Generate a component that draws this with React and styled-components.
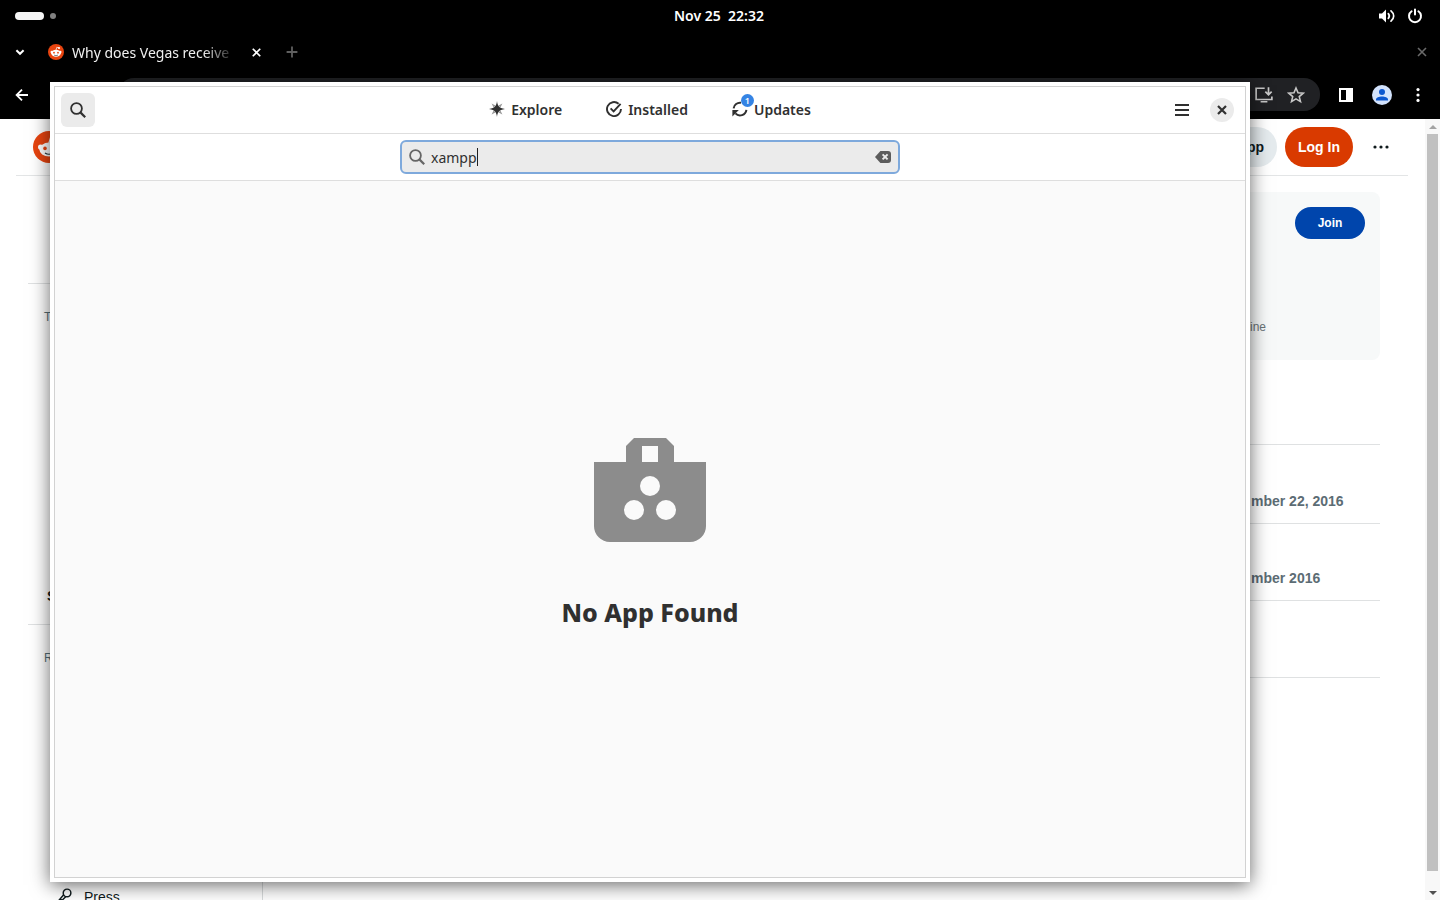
import React from "react"
import styled, { createGlobalStyle } from "styled-components"

const GlobalStyle = createGlobalStyle`
  * { box-sizing: border-box; }
  body { margin: 0; background: #000000; overflow: hidden; }
  button { border: 0; padding: 0; background: none; font: inherit; color: inherit; }
  a { color: inherit; text-decoration: none; }
  svg { display: block; flex: none; }
`;

const Desktop = styled.div`
  position: relative;
  display: flex;
  flex-direction: column;
  height: 100vh;
  overflow: hidden;
  background: #000000;
  color: #ffffff;
  font-family: "Noto Sans", sans-serif;
  font-size: 14px;
`;

/* shell top bar */
const TopBar = styled.header`
  display: grid;
  grid-template-columns: 1fr auto 1fr;
  align-items: center;
  height: 32px;
  padding: 0 17px 0 15px;
`;

const Workspaces = styled.div`
  display: flex;
  align-items: center;
  gap: 6px;
`;

const Pill = styled.span`
  width: ${props => (props.$active ? "29px" : "6px")};
  height: ${props => (props.$active ? "8px" : "6px")};
  border-radius: 4px;
  background: ${props => (props.$active ? "#f6f6f6" : "#808080")};
`;

const Clock = styled.time`
  padding-bottom: 2px;
  font-weight: 600;
  white-space: pre;
`;

const Tray = styled.div`
  display: flex;
  justify-content: flex-end;
  align-items: center;
  gap: 12px;
`;

/* browser */
const TabStrip = styled.div`
  display: flex;
  align-items: center;
  height: 40px;
  padding: 0 10px;
`;

const IconButton = styled.button`
  display: flex;
  align-items: center;
  justify-content: center;
  width: ${props => props.$size || 24}px;
  height: ${props => props.$size || 24}px;
  color: ${props => props.$color || "inherit"};
`;

const Tab = styled.div`
  display: flex;
  align-items: center;
  gap: 8px;
  margin: 0 12px 0 18px;
  width: 220px;
`;

const TabTitle = styled.span`
  flex: 1;
  overflow: hidden;
  white-space: nowrap;
  color: #f0f0f0;
  mask-image: linear-gradient(to right, #000 80%, transparent);
`;

const Spacer = styled.div`
  flex: 1;
`;

const Toolbar = styled.div`
  display: flex;
  align-items: center;
  height: 47px;
  padding: 0 10px 2px;
`;

const Omnibox = styled.div`
  flex: 1;
  display: flex;
  align-items: center;
  justify-content: flex-end;
  gap: 8px;
  height: 33px;
  margin: 0 14px 0 84px;
  padding: 0 12px;
  border-radius: 16px;
  background: #202124;
  color: #c7c7c7;
`;

const ToolbarActions = styled.div`
  display: flex;
  gap: 12px;
`;

/* web page */
const Viewport = styled.div`
  flex: 1;
  display: flex;
  min-height: 0;
  background: #ffffff;
  color: #0f1a1c;
  font-family: "Liberation Sans", sans-serif;
`;

const Page = styled.div`
  flex: 1;
  padding: 0 17px 0 16px;
`;

const SiteHeader = styled.div`
  display: flex;
  align-items: center;
  gap: 8px;
  height: 57px;
  padding: 0 7px 0 17px;
  border-bottom: 1px solid #e3e5e6;
`;

const PillButton = styled.button`
  min-width: 68px;
  height: 40px;
  padding: 0 13px;
  border-radius: 20px;
  background: ${props => props.$bg};
  color: ${props => props.$color || "#ffffff"};
  font-size: 14px;
  font-weight: 700;
`;

const JoinButton = styled(PillButton)`
  min-width: 70px;
  height: 32px;
  font-size: 12px;
`;

const Columns = styled.div`
  display: flex;
  height: 100%;
`;

const Sidebar = styled.nav`
  width: 247px;
  padding: 0 12px;
  border-right: 1px solid #d8dbdc;
  font-size: 14px;
`;

const SideSection = styled.section`
  height: ${props => props.$height}px;
  padding: 0 16px;
  border-bottom: 1px solid #dfe1e2;
`;

const SideHeading = styled.h2`
  margin: 0;
  padding-top: 24px;
  font-size: 12px;
  font-weight: 400;
  line-height: 18px;
  color: #576f76;
`;

const SideMore = styled.a`
  display: block;
  margin-top: 260px;
  padding-left: 3px;
  font-weight: 700;
  line-height: 20px;
`;

const SideLink = styled.a`
  display: flex;
  align-items: center;
  gap: 12px;
  margin-top: 220px;
  padding-left: 10px;
  line-height: 20px;
`;

const Main = styled.main`
  flex: 1;
  padding: 16px 28px 0 12px;
`;

const Banner = styled.section`
  display: flex;
  flex-direction: column;
  align-items: flex-end;
  justify-content: space-between;
  height: 168px;
  padding: 15px;
  border-radius: 8px;
  background: #f7f9f9;
`;

const BannerNote = styled.span`
  padding: 0 99px 10px 0;
  font-size: 12px;
  line-height: 16px;
  color: #6a7478;
`;

const DateRow = styled.div`
  display: grid;
  grid-template-columns: 1fr 129px;
  align-items: end;
  height: ${props => props.$height}px;
  padding-bottom: 12px;
  border-bottom: 1px solid #dfe1e2;
  font-size: 14px;
  font-weight: 700;
  line-height: 20px;
  color: #5c6c74;
`;

const DateText = styled.span`
  grid-column: 2;
`;

const Scrollbar = styled.div`
  display: flex;
  flex-direction: column;
  align-items: center;
  width: 15px;
  background: #f8f8f8;
`;

const ScrollArrow = styled.span`
  display: flex;
  align-items: center;
  height: 15px;
  color: ${props => props.$color};
`;

const Thumb = styled.div`
  flex: 1;
  width: 11px;
  margin-bottom: 14px;
  background: #c0c0c0;
`;

/* software window */
const SoftwareWindow = styled.section`
  position: absolute;
  top: 82px;
  right: 190px;
  bottom: 18px;
  left: 50px;
  display: flex;
  padding: 4px;
  background: #ffffff;
  color: #303030;
  box-shadow: 0 3px 18px rgba(0, 0, 0, 0.6);
`;

const WindowBody = styled.div`
  flex: 1;
  display: flex;
  flex-direction: column;
  border: 1px solid #d2d2d2;
`;

const HeaderBar = styled.header`
  display: grid;
  grid-template-columns: 1fr auto 1fr;
  align-items: center;
  height: 47px;
  padding: 0 6px;
  border-bottom: 1px solid #dedede;
`;

const SearchToggle = styled(IconButton)`
  border-radius: 6px;
  background: #ebebeb;
`;

const ViewSwitcher = styled.nav`
  display: flex;
  gap: 44px;
`;

const ViewButton = styled.button`
  display: flex;
  align-items: center;
  gap: 6px;
  height: 34px;
  padding-bottom: 2px;
  font-weight: 600;
`;

const ViewIcon = styled.span`
  position: relative;
`;

const Badge = styled.span`
  position: absolute;
  top: -7px;
  left: 9px;
  width: 13px;
  height: 13px;
  border-radius: 50%;
  background: #3584e4;
  color: #ffffff;
  font-size: 9px;
  line-height: 13px;
  text-align: center;
`;

const WindowControls = styled.div`
  display: flex;
  justify-content: flex-end;
  align-items: center;
  gap: 6px;
`;

const CloseCircle = styled.span`
  display: flex;
  align-items: center;
  justify-content: center;
  width: 24px;
  height: 24px;
  border-radius: 50%;
  background: #ebebeb;
`;

const SearchBar = styled.div`
  display: flex;
  justify-content: center;
  align-items: center;
  height: 47px;
  border-bottom: 1px solid #dedede;
`;

const SearchField = styled.label`
  display: flex;
  align-items: center;
  width: 500px;
  height: 34px;
  padding: 0 7px;
  border: 2px solid #7ea9dc;
  border-radius: 6px;
  background: #ebebeb;
  color: #666666;
`;

const SearchInput = styled.input`
  field-sizing: content;
  margin-left: 6px;
  padding: 0;
  border: 0;
  outline: 0;
  background: none;
  color: #303030;
  font: 14px "Noto Sans", sans-serif;
`;

const Caret = styled.span`
  width: 1px;
  height: 18px;
  background: #202020;
`;

const StatusPage = styled.div`
  flex: 1;
  display: flex;
  flex-direction: column;
  align-items: center;
  justify-content: center;
  gap: 36px;
  padding-top: 2px;
  background: #fafafa;
`;

const StatusTitle = styled.h1`
  margin: 0;
  font-size: 25px;
  font-weight: 800;
  line-height: 36px;
`;

const Stroke = ({ size = 16, width = 2, children, ...rest }) => (
  <svg width={size} height={size} viewBox="0 0 16 16" fill="none" stroke="currentColor" strokeWidth={width} {...rest}>
    {children}
  </svg>
)

const SearchIcon = () => (
  <Stroke width={1.8}>
    <circle cx="6.5" cy="6.5" r="5.4" />
    <path d="M10.4 10.4L15.2 15.2" strokeWidth="2.2" />
  </Stroke>
)

const CrossIcon = ({ size = 16, width = 2 }) => (
  <Stroke size={size} width={width}>
    <path d="M4 4l8 8M12 4l-8 8" />
  </Stroke>
)

const SoundIcon = () => (
  <Stroke width={1.7} strokeLinecap="round">
    <path d="M0 5.5h3L7 1.5v13L3 10.5H0z" fill="currentColor" stroke="none" />
    <path d="M9.3 5.6c1.2 1.4 1.2 3.4 0 4.8M12 2.8c3.6 3 3.6 7.4 0 10.4" />
  </Stroke>
)

const PowerIcon = () => (
  <Stroke width={2} strokeLinecap="round">
    <path d="M4.6 3.2a6 6 0 1 0 6.8 0M8 1.4v5.2" />
  </Stroke>
)

const RedditIcon = ({ size }) => (
  <svg width={size} height={size} viewBox="0 0 32 32">
    <circle cx="16" cy="16" r="16" fill="#e8440f" />
    <path d="M16 12l1.6-5.4 4 1" fill="none" stroke="#ffffff" strokeWidth="1.4" />
    <circle cx="22" cy="8" r="2.2" fill="#ffffff" />
    <circle cx="7.6" cy="16" r="2.6" fill="#ffffff" />
    <circle cx="24.4" cy="16" r="2.6" fill="#ffffff" />
    <ellipse cx="16" cy="18.6" rx="9.6" ry="7" fill="#ffffff" />
    <circle cx="12" cy="17.4" r="1.8" fill="#e8440f" />
    <circle cx="20" cy="17.4" r="1.8" fill="#e8440f" />
    <path d="M12 22c2.2 1.6 5.8 1.6 8 0" fill="none" stroke="#25343a" strokeWidth="1.2" />
  </svg>
)

const ExploreIcon = () => (
  <svg width="16" height="16" viewBox="0 0 16 16" fill="currentColor">
    <path d="M8 0c.6 4.8 1.6 6.8 8 8c-6.400 1.200-7.400 3.200-8 8c-.6-4.800-1.600-6.800-8-8c6.400-1.200 7.400-3.200 8-8z" />
    <path d="M2.600 2.600L6.400 4.600L4.600 6.400zM13.400 2.600L11.400 6.400L9.600 4.600zM2.600 13.400L4.600 9.600L6.400 11.400zM13.400 13.400L9.600 11.400L11.400 9.600z" opacity="0.5" />
  </svg>
)

const InstalledIcon = () => (
  <Stroke width={1.9}>
    <path d="M12.600 2.800A7 7 0 1 0 15 8" />
    <path d="M4.600 7.400l3 3 7-7.600" />
  </Stroke>
)

const UpdatesIcon = () => (
  <Stroke>
    <path d="M1.600 7.400A6.400 6.400 0 0 1 9 1.800M14.400 8.800A6.400 6.400 0 0 1 3.400 12.400" />
    <path d="M0.400 15.400V9h6.400z" fill="currentColor" stroke="none" />
  </Stroke>
)

const ClearIcon = () => (
  <svg width="16" height="16" viewBox="0 0 16 16">
    <path d="M5.400 2H13a3 3 0 0 1 3 3v6a3 3 0 0 1-3 3H5.400L0 8z" fill="#5c5c5c" />
    <path d="M7.600 5.400l5 5M12.600 5.400l-5 5" stroke="#ebebeb" strokeWidth="2" />
  </svg>
)

const BagIcon = () => (
  <svg width="128" height="128" viewBox="0 0 16 16" fill="#8c8c8c">
    <path
      fillRule="evenodd"
      d="M6 1h4l1 1v2h4v8a2 2 0 0 1-2 2H3a2 2 0 0 1-2-2V4h4V2zM7 2v2h2V2z"
    />
    <g fill="#fafafa">
      <circle cx="8" cy="7" r="1.25" />
      <circle cx="6" cy="10" r="1.25" />
      <circle cx="10" cy="10" r="1.25" />
    </g>
  </svg>
)

const Shell = () => (
  <TopBar>
    <Workspaces>
      <Pill $active />
      <Pill />
    </Workspaces>
    <Clock>{"Nov 25  22:32"}</Clock>
    <Tray>
      <SoundIcon />
      <PowerIcon />
    </Tray>
  </TopBar>
)

const BrowserChrome = () => (
  <>
    <TabStrip>
      <IconButton $size={20} aria-label="Search tabs">
        <Stroke><path d="M4.4 6.2L8 9.8l3.6-3.6" /></Stroke>
      </IconButton>
      <Tab>
        <RedditIcon size={16} />
        <TabTitle>Why does Vegas receive</TabTitle>
        <IconButton aria-label="Close tab"><CrossIcon size={15} width={1.8} /></IconButton>
      </Tab>
      <IconButton $color="#5f5f5f" aria-label="New tab">
        <Stroke width={1.8}><path d="M8 2.6v10.8M2.6 8h10.8" /></Stroke>
      </IconButton>
      <Spacer />
      <IconButton $size={16} $color="#6a6a6a" aria-label="Close browser"><CrossIcon width={1.6} /></IconButton>
    </TabStrip>
    <Toolbar>
      <IconButton aria-label="Back">
        <Stroke width={1.8}><path d="M14 8H3M8 2.6L2.6 8L8 13.4" /></Stroke>
      </IconButton>
      <Omnibox>
        <IconButton aria-label="Install">
          <Stroke size={18} width={1.5}>
            <path d="M8.6 2H1v10h14V9.4M5 14h6M12 1v6.4M9.2 5L12 7.8L14.8 5" />
          </Stroke>
        </IconButton>
        <IconButton aria-label="Bookmark">
          <Stroke size={18} width={1.4}>
            <path d="M8 1.8l1.8 4.2 4.6.4-3.5 3 1.1 4.5L8 11.5l-4 2.4 1.1-4.5-3.5-3 4.6-.4z" />
          </Stroke>
        </IconButton>
      </Omnibox>
      <ToolbarActions>
        <IconButton aria-label="Side panel">
          <Stroke>
            <path d="M2 2h12v12H2z" />
            <path d="M9 2h5v12H9z" fill="currentColor" />
          </Stroke>
        </IconButton>
        <IconButton aria-label="Profile">
          <svg width="20" height="20" viewBox="0 0 20 20">
            <circle cx="10" cy="10" r="10" fill="#d3e3fd" />
            <circle cx="10" cy="7" r="3" fill="#0b57d0" />
            <path d="M4 15.6v-1c0-4 12-4 12 0v1z" fill="#0b57d0" />
          </svg>
        </IconButton>
        <IconButton aria-label="Menu">
          <svg width="16" height="16" viewBox="0 0 16 16" fill="currentColor">
            <circle cx="8" cy="2.6" r="1.6" />
            <circle cx="8" cy="8" r="1.6" />
            <circle cx="8" cy="13.4" r="1.6" />
          </svg>
        </IconButton>
      </ToolbarActions>
    </Toolbar>
  </>
)

const WebPage = () => (
  <Viewport>
    <Page>
      <SiteHeader>
        <RedditIcon size={32} />
        <Spacer />
        <PillButton $bg="#e5ebee" $color="#0f1a1c">Get app</PillButton>
        <PillButton $bg="#d93a00">Log In</PillButton>
        <IconButton $size={40} aria-label="More">
          <svg width="16" height="16" viewBox="0 0 16 16" fill="currentColor">
            <circle cx="2" cy="8" r="1.6" />
            <circle cx="8" cy="8" r="1.6" />
            <circle cx="14" cy="8" r="1.6" />
          </svg>
        </IconButton>
      </SiteHeader>
      <Columns>
        <Sidebar>
          <SideSection $height={108} />
          <SideSection $height={341}>
            <SideHeading>TOPICS</SideHeading>
            <SideMore href="#">See more</SideMore>
          </SideSection>
          <SideSection $height={320}>
            <SideHeading>RESOURCES</SideHeading>
            <SideLink href="#">
              <Stroke size={18} width={1.3}>
                <circle cx="11.6" cy="4.4" r="3.4" />
                <path d="M8.6 6L1.6 14.2M10.4 7.8L3 15M6.2 9.8v1" />
              </Stroke>
              Press
            </SideLink>
          </SideSection>
        </Sidebar>
        <Main>
          <Banner>
            <JoinButton $bg="#0045ac">Join</JoinButton>
            <BannerNote>Online</BannerNote>
          </Banner>
          <DateRow $height={85} />
          <DateRow $height={79}><DateText>mber 22, 2016</DateText></DateRow>
          <DateRow $height={77}><DateText>mber 2016</DateText></DateRow>
          <DateRow $height={77} />
        </Main>
      </Columns>
    </Page>
    <Scrollbar>
      <ScrollArrow $color="#a3a3a3">
        <svg width="8" height="4" viewBox="0 0 8 4" fill="currentColor"><path d="M0 4l4-4 4 4z" /></svg>
      </ScrollArrow>
      <Thumb />
      <ScrollArrow $color="#505050">
        <svg width="8" height="4" viewBox="0 0 8 4" fill="currentColor"><path d="M0 0l4 4 4-4z" /></svg>
      </ScrollArrow>
    </Scrollbar>
  </Viewport>
)

const Software = () => (
  <SoftwareWindow>
    <WindowBody>
      <HeaderBar>
        <SearchToggle $size={34} aria-label="Search"><SearchIcon /></SearchToggle>
        <ViewSwitcher>
          <ViewButton><ExploreIcon />Explore</ViewButton>
          <ViewButton><InstalledIcon />Installed</ViewButton>
          <ViewButton>
            <ViewIcon>
              <UpdatesIcon />
              <Badge>1</Badge>
            </ViewIcon>
            Updates
          </ViewButton>
        </ViewSwitcher>
        <WindowControls>
          <IconButton $size={34} aria-label="Main menu">
            <Stroke><path d="M1 3h14M1 8h14M1 13h14" /></Stroke>
          </IconButton>
          <IconButton $size={34} aria-label="Close">
            <CloseCircle><CrossIcon width={2.2} /></CloseCircle>
          </IconButton>
        </WindowControls>
      </HeaderBar>
      <SearchBar>
        <SearchField>
          <SearchIcon />
          <SearchInput type="text" aria-label="Search apps" defaultValue="xampp" />
          <Caret />
          <Spacer />
          <ClearIcon />
        </SearchField>
      </SearchBar>
      <StatusPage>
        <BagIcon />
        <StatusTitle>No App Found</StatusTitle>
      </StatusPage>
    </WindowBody>
  </SoftwareWindow>
)

const App = () => (
  <Desktop>
    <GlobalStyle />
    <Shell />
    <BrowserChrome />
    <WebPage />
    <Software />
  </Desktop>
)

export default App
